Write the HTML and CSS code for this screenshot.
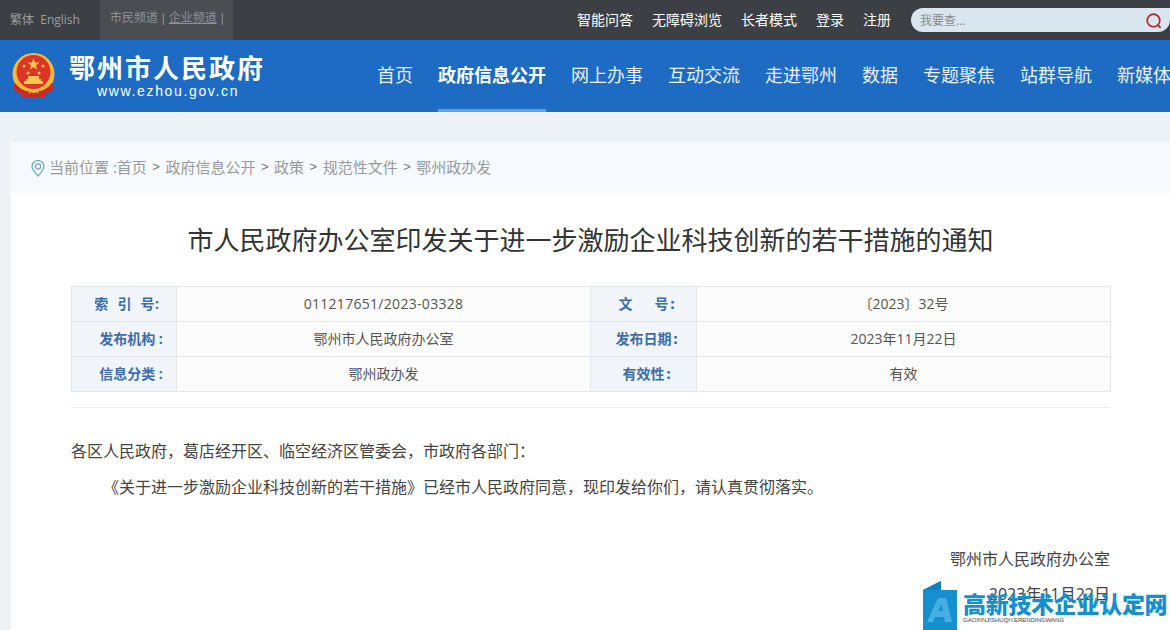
FILE: index.html
```html
<!DOCTYPE html>
<html lang="zh-CN">
<head>
<meta charset="utf-8">
<title>市人民政府办公室印发关于进一步激励企业科技创新的若干措施的通知</title>
<link rel="stylesheet" href="styles.css">
</head>
<body>
<div class="topbar">
  <div class="lang">繁体&nbsp; English</div>
  <div class="channels">市民频道 | <u>企业频道</u> |</div>
  <div class="toplinks">
    <a>智能问答</a><a>无障碍浏览</a><a>长者模式</a><a>登录</a><a>注册</a>
  </div>
  <div class="search">
    <span>我要查...</span>
    <svg class="search-icon" width="18" height="18" viewBox="0 0 18 18"><circle cx="8.5" cy="8.5" r="6.3" fill="none" stroke="#c2202c" stroke-width="1.7"/><path d="M13 13.2l2.6 2.6" stroke="#c2202c" stroke-width="1.9" fill="none"/></svg>
  </div>
</div>
<header class="header">
  <div class="logo">
    <svg class="emblem" width="44" height="46" viewBox="0 0 44 46">
      <circle cx="21.500" cy="21" r="21" fill="#f4bb3c"/>
      <circle cx="21.500" cy="19" r="17" fill="#dc3427"/>
      <path d="M21.500 5l1.500 4.500h4.700l-3.800 2.800 1.400 4.500-3.800-2.800-3.800 2.800 1.400-4.500-3.800-2.800H20z" fill="#f7c948"/>
      <circle cx="12" cy="13" r="1.500" fill="#f7c948"/><circle cx="31" cy="13" r="1.500" fill="#f7c948"/>
      <circle cx="16" cy="20" r="1.500" fill="#f7c948"/><circle cx="27" cy="20" r="1.500" fill="#f7c948"/>
      <path d="M14 26h15v2h2v3H12v-3h2zM16 23h11v3H16z" fill="#f7c948"/>
      <path d="M3 30c5 6 12 7 18.500 7S35 36 40 30l2 5c-2 4-5 5-8 5l-1 4c-3 1-5-1-6 0h-11c-1-1-3 1-6 0l-1-4c-3 0-6-1-8-5z" fill="#c92a22"/>
      <path d="M6 32c5 5 10 6 15.500 6S32 37 37 32" fill="none" stroke="#f4bb3c" stroke-width="1.800"/>
      <path d="M17 40c1.500-2 3-2 4.500-.5 1.500-1.500 3-1.500 4.500.5" fill="none" stroke="#f4bb3c" stroke-width="1.500"/>
    </svg>
    <div class="logo-text">
      <div class="logo-name">鄂州市人民政府</div>
      <div class="logo-url">www.ezhou.gov.cn</div>
    </div>
  </div>
  <nav class="nav">
    <a>首页</a><a class="active">政府信息公开</a><a>网上办事</a><a>互动交流</a><a>走进鄂州</a><a>数据</a><a>专题聚焦</a><a>站群导航</a><a>新媒体</a>
  </nav>
</header>
<main class="page">
  <div class="crumb">
    <svg class="pin" width="14" height="17" viewBox="0 0 14 17"><path d="M7 16C3.500 12 1 9.500 1 6.500a6 6 0 0 1 12 0C13 9.500 10.500 12 7 16z" fill="none" stroke="#6fa5c9" stroke-width="1.200"/><circle cx="7" cy="6.500" r="2.600" fill="none" stroke="#6fa5c9" stroke-width="1.200"/></svg>
    <span>当前位置 :首页</span><i>&gt;</i><span>政府信息公开</span><i>&gt;</i><span>政策</span><i>&gt;</i><span>规范性文件</span><i>&gt;</i><span>鄂州政办发</span>
  </div>
  <article class="article">
    <h1>市人民政府办公室印发关于进一步激励企业科技创新的若干措施的通知</h1>
    <table class="meta">
      <colgroup><col class="c-a"><col class="c-b"><col class="c-c"><col class="c-d"></colgroup>
      <tr><th class="wide">索&nbsp; 引&nbsp; 号:</th><td class="num">011217651/2023-03328</td><th class="second">文 &nbsp; &nbsp; &nbsp;号<b class="colon">:</b></th><td>〔2023〕32号</td></tr>
      <tr><th class="first">发布机构 :</th><td>鄂州市人民政府办公室</td><th class="second">发布日期<b class="colon">:</b></th><td>2023年11月22日</td></tr>
      <tr><th class="first">信息分类 :</th><td>鄂州政办发</td><th class="second">有效性<b class="colon">:</b></th><td>有效</td></tr>
    </table>
    <div class="rule"></div>
    <p class="salute">各区人民政府，葛店经开区、临空经济区管委会，市政府各部门：</p>
    <p class="para">《关于进一步激励企业科技创新的若干措施》已经市人民政府同意，现印发给你们，请认真贯彻落实。</p>
    <p class="sign">鄂州市人民政府办公室</p>
    <p class="date">2023年11月22日</p>
  </article>
</main>
<div class="watermark">
  <svg class="wm-icon" width="34" height="49" viewBox="0 0 34 49"><path d="M0 9L18 0v9h16v40H0z" fill="#1690cd"/><path d="M0 9L18 0v9z" fill="#1480bb"/><path d="M4 41L15 17h8l6 24h-7l-1-5h-9l-2 5zM15 30h5l-1.500-7z" fill="#45afe3"/></svg>
  <div class="wm-text">
    <div class="wm-cn">高新技术企业认定网</div>
    <div class="wm-en">GAOXINJISHUQIYERENDINGWANG</div>
  </div>
</div>
</body>
</html>
```
FILE: styles.css
```css
* { box-sizing: border-box; }
html, body { margin: 0; padding: 0; height: 630px; overflow: hidden; }
body {
  width: 1170px;
  position: relative;
  background: #edf2f7;
  font-family: "Open Sans", "Noto Sans CJK SC", sans-serif;
  color: #444;
}
.topbar {
  height: 40px;
  display: flex;
  align-items: center;
  background: #3c4045;
  font-size: 14px;
}
.lang { width: 100px; padding: 0 0 3px 10px; color: #9a9da0; font-size: 12px; }
.channels {
  width: 133px;
  height: 40px;
  line-height: 37px;
  padding-left: 10px;
  background: #4a4e53;
  color: #8f9296;
  font-family: "Liberation Sans", "Noto Sans CJK SC", sans-serif;
  font-size: 12px;
  word-spacing: 0.500px;
}
.channels u { text-decoration: underline; }
.toplinks { margin-left: auto; padding-bottom: 3px; display: flex; gap: 19px; color: #fff; }
.toplinks a { white-space: nowrap; }
.search {
  width: 259px;
  height: 24px;
  margin-left: 20px;
  flex: none;
  display: flex;
  align-items: center;
  justify-content: space-between;
  padding: 0 0 0 9px;
  border-radius: 12px 0 12px 12px;
  background: #d9e5ef;
  color: #8a8a8a;
  font-size: 12px;
}
.search-icon { margin-right: 7px; margin-top: 1px; }
.header {
  height: 72px;
  display: flex;
  background: #1e6bc3;
  overflow: hidden;
}
.logo { width: 377px; flex: none; display: flex; padding: 13px 0 0 12px; }
.emblem { flex: none; }
.logo-text { margin-left: 13px; color: #fff; }
.logo-name {
  font-size: 26px;
  font-weight: 700;
  line-height: 30px;
  letter-spacing: 2px;
  white-space: nowrap;
}
.logo-url {
  margin: 0 0 0 28px;
  font-family: "Liberation Sans", sans-serif;
  font-size: 14px;
  line-height: 16px;
  letter-spacing: 1.650px;
  white-space: nowrap;
}
.nav { display: flex; gap: 25px; flex: none; color: #e9f1fa; font-size: 18px; }
.nav a { display: block; height: 72px; line-height: 71px; white-space: nowrap; }
.nav a.active { font-weight: 700; color: #fff; border-bottom: 3px solid #5fa4e6; }
.page { margin-left: 11px; padding-top: 30px; }
.crumb {
  height: 51px;
  display: flex;
  align-items: center;
  padding: 0 0 3px 20px;
  background: #f6f9fd;
  color: #9a9a9a;
  font-size: 15px;
}
.pin { margin: 4px 4px 0 0; }
.crumb i {
  font-style: normal;
  font-family: "Liberation Sans", sans-serif;
  font-size: 13px;
  margin: 0 5.500px;
  color: #777;
}
.article { background: #fff; height: 437px; padding: 0 60px 0 60px; }
h1 {
  margin: 0;
  padding-top: 28px;
  height: 93px;
  text-align: center;
  font-size: 26px;
  line-height: 38px;
  font-weight: 400;
  color: #333;
  white-space: nowrap;
}
.meta {
  width: 1039px;
  table-layout: fixed;
  border-collapse: collapse;
  font-size: 14px;
}
.c-a { width: 105px; }
.c-b { width: 414px; }
.c-c { width: 106px; }
.c-d { width: 414px; }
.meta th, .meta td {
  height: 35px;
  padding: 0 0 2px;
  border: 1px solid #e3e6ea;
  text-align: center;
  white-space: nowrap;
}
.meta th { background: #f1f5fa; color: #3a6ea8; font-weight: 700; }
.meta th.first { padding-left: 14px; }
.meta th.wide { padding-left: 6px; letter-spacing: 0.600px; }
.meta th.second { padding-left: 6px; }
.colon { margin-left: 2px; }
.meta td { background: #fcfcfd; color: #555; font-weight: 400; }
.meta td.num { letter-spacing: 0.300px; }
.rule { margin-top: 15px; border-top: 1px solid #eceef0; }
.salute, .para, .sign, .date {
  margin: 0;
  font-size: 16px;
  line-height: 24px;
  color: #444;
  white-space: nowrap;
}
.salute { margin-top: 31px; }
.para { margin-top: 12px; text-indent: 2em; }
.sign { margin-top: 48px; text-align: right; }
.date { margin-top: 11px; text-align: right; }
.watermark {
  position: absolute;
  left: 923px;
  top: 581px;
  display: flex;
  gap: 6px;
}
.wm-text { padding-top: 11px; }
.wm-cn {
  font-size: 23px;
  line-height: 24px;
  font-weight: 900;
  letter-spacing: -0.300px;
  color: #1690cd;
  white-space: nowrap;
}
.wm-en {
  font-family: "Liberation Sans", sans-serif;
  font-size: 6px;
  line-height: 8px;
  color: #444;
  white-space: nowrap;
}
```
